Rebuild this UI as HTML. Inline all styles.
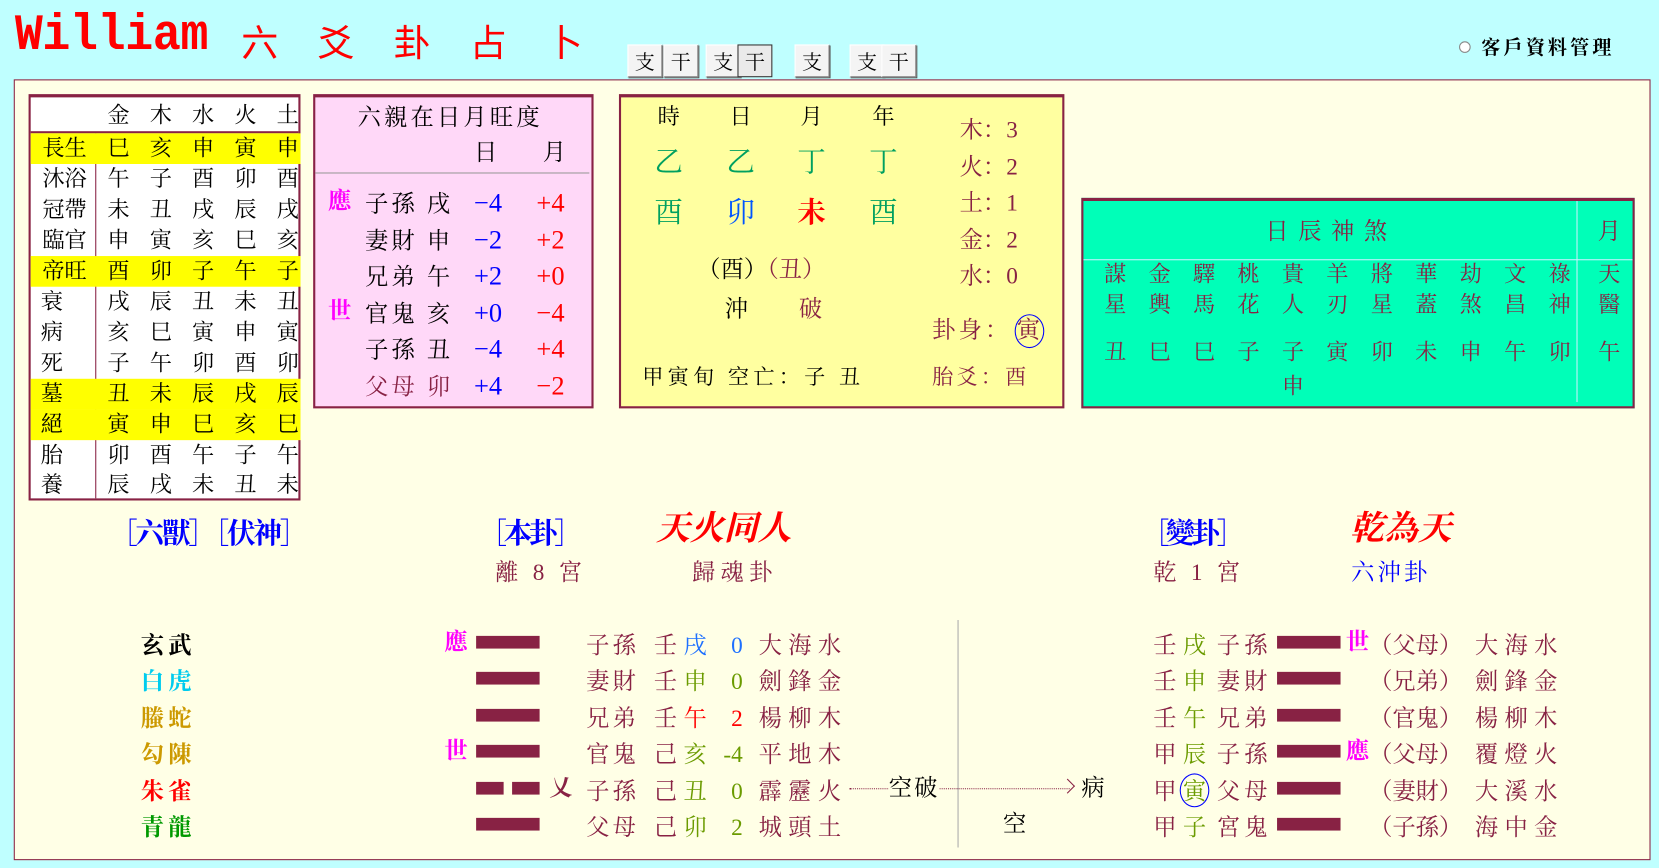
<!DOCTYPE html>
<html><head><meta charset="utf-8">
<style>
html,body{margin:0;padding:0;width:1659px;height:868px;overflow:hidden;background:#bfffff;}
#w{position:absolute;left:0;top:0;width:1568px;height:820px;transform:scale(1.05804);transform-origin:0 0;font-family:"Liberation Serif","Noto Serif CJK SC",serif;color:#882244;}
.a{position:absolute;white-space:nowrap;}
.t{font-size:22px;line-height:28px;}
.btn{position:absolute;top:42px;height:29px;width:31px;background:#f4f4f4;border:1px solid #fff;border-right-color:#888;border-bottom-color:#888;box-shadow:1px 1px 0 #555;font-size:19px;line-height:29px;text-align:center;color:#000;font-family:"Noto Serif CJK SC",serif;}
.row{position:absolute;left:0;width:255px;height:29px;line-height:29px;font-size:21px;color:#000;}
.row span{position:absolute;top:0;width:40px;text-align:center;}
.y{background:#ffff00;}
.bar{position:absolute;height:12px;background:#882244;}
.g span{position:absolute;width:30px;text-align:center;}
.ls{letter-spacing:6px;}
</style></head><body><div id="w">

<div class="a" style="left:14px;top:6px;font-family:'Liberation Mono',monospace;font-weight:bold;font-size:44px;letter-spacing:-0.3px;color:#ff0000;line-height:56px;transform:scaleY(1.1);">William</div>
<div class="a" style="left:228px;top:14px;font-size:35px;color:#ff0000;letter-spacing:37px;font-family:'Noto Sans CJK SC',sans-serif;line-height:50px;">六爻卦占卜</div>

<div class="btn" style="left:593px">支</div><div class="btn" style="left:627px">干</div>
<div class="btn" style="left:667px">支</div><div class="btn" style="left:697px;border-color:#333;background:#eaeaea;box-shadow:none">干</div>
<div class="btn" style="left:751px">支</div>
<div class="btn" style="left:803px">支</div><div class="btn" style="left:833px">干</div>

<div class="a" style="left:1379px;top:39px;width:9px;height:9px;border-radius:50%;background:#fff;border:1px solid #888;"></div>
<div class="a" style="left:1400px;top:31px;font-size:18px;color:#000;letter-spacing:3px;font-weight:bold;">客戶資料管理</div>

<div class="a" style="left:13px;top:75px;width:1545px;height:736px;background:#ffffe6;border:1px solid #882244;"></div>

<div class="a" style="left:27px;top:89px;width:253px;height:379px;background:#fff;border:2px solid #882244;border-top-width:3px;">
 <div class="row" style="top:3px;"><span style="left:63px">金</span><span style="left:103px">木</span><span style="left:143px">水</span><span style="left:183px">火</span><span style="left:223px">土</span></div>
 <div class="a" style="left:0;top:32px;width:253px;height:2px;background:#882244"></div>
 <div class="a" style="left:61px;top:34px;width:1px;height:345px;background:#882244"></div>
 <div class="row y" style="top:34px"><span style="left:4px;width:56px">長生</span><span style="left:63px">巳</span><span style="left:103px">亥</span><span style="left:143px">申</span><span style="left:183px">寅</span><span style="left:223px">申</span></div>
 <div class="row" style="top:63px"><span style="left:4px;width:56px">沐浴</span><span style="left:63px">午</span><span style="left:103px">子</span><span style="left:143px">酉</span><span style="left:183px">卯</span><span style="left:223px">酉</span></div>
 <div class="row" style="top:92px"><span style="left:4px;width:56px">冠帶</span><span style="left:63px">未</span><span style="left:103px">丑</span><span style="left:143px">戌</span><span style="left:183px">辰</span><span style="left:223px">戌</span></div>
 <div class="row" style="top:121px"><span style="left:4px;width:56px">臨官</span><span style="left:63px">申</span><span style="left:103px">寅</span><span style="left:143px">亥</span><span style="left:183px">巳</span><span style="left:223px">亥</span></div>
 <div class="row y" style="top:150px"><span style="left:4px;width:56px">帝旺</span><span style="left:63px">酉</span><span style="left:103px">卯</span><span style="left:143px">子</span><span style="left:183px">午</span><span style="left:223px">子</span></div>
 <div class="row" style="top:179px"><span style="left:0px">衰</span><span style="left:63px">戌</span><span style="left:103px">辰</span><span style="left:143px">丑</span><span style="left:183px">未</span><span style="left:223px">丑</span></div>
 <div class="row" style="top:208px"><span style="left:0px">病</span><span style="left:63px">亥</span><span style="left:103px">巳</span><span style="left:143px">寅</span><span style="left:183px">申</span><span style="left:223px">寅</span></div>
 <div class="row" style="top:237px"><span style="left:0px">死</span><span style="left:63px">子</span><span style="left:103px">午</span><span style="left:143px">卯</span><span style="left:183px">酉</span><span style="left:223px">卯</span></div>
 <div class="row y" style="top:266px"><span style="left:0px">墓</span><span style="left:63px">丑</span><span style="left:103px">未</span><span style="left:143px">辰</span><span style="left:183px">戌</span><span style="left:223px">辰</span></div>
 <div class="row y" style="top:295px"><span style="left:0px">絕</span><span style="left:63px">寅</span><span style="left:103px">申</span><span style="left:143px">巳</span><span style="left:183px">亥</span><span style="left:223px">巳</span></div>
 <div class="row" style="top:324px"><span style="left:0px">胎</span><span style="left:63px">卯</span><span style="left:103px">酉</span><span style="left:143px">午</span><span style="left:183px">子</span><span style="left:223px">午</span></div>
 <div class="row" style="top:352px"><span style="left:0px">養</span><span style="left:63px">辰</span><span style="left:103px">戌</span><span style="left:143px">未</span><span style="left:183px">丑</span><span style="left:223px">未</span></div>
</div>

<div class="a" style="left:296px;top:89px;width:261px;height:292px;background:#ffd8f8;border:2px solid #882244;border-top-width:3px;">
 <div class="a t" style="left:40px;top:5px;color:#000;letter-spacing:3px;">六親在日月旺度</div>
 <div class="a t" style="left:150px;top:38px;color:#000;">日</div>
 <div class="a t" style="left:215px;top:38px;color:#000;">月</div>
 <div class="a" style="left:0;top:71px;width:259px;height:1px;background:#999"></div>
 <div class="a t" style="left:12px;top:84px;color:#ff00ff;font-weight:bold">應</div>
 <div class="a t" style="left:12px;top:188px;color:#ff00ff;font-weight:bold">世</div>
 <div class="a t" style="left:47px;top:84px;color:#000;line-height:34.5px;letter-spacing:3px;">子孫 戌<br>妻財 申<br>兄弟 午<br>官鬼 亥<br>子孫 丑<br><span style="color:#882244">父母 卯</span></div>
 <div class="a" style="left:150px;top:84px;color:#0000ff;font-size:25px;line-height:34.5px;">−4<br>−2<br>+2<br>+0<br>−4<br>+4</div>
 <div class="a" style="left:209px;top:84px;color:#ff0000;font-size:25px;line-height:34.5px;">+4<br>+2<br>+0<br>−4<br>+4<br>−2</div>
</div>

<div class="a" style="left:585px;top:89px;width:417px;height:292px;background:#ffffa0;border:2px solid #882244;border-top-width:3px;">
 <div class="a g" style="left:0;top:4px;font-size:21px;color:#000;line-height:28px;"><span style="left:30px">時</span><span style="left:98px">日</span><span style="left:165px">月</span><span style="left:233px">年</span></div>
 <div class="a g" style="left:0;top:44px;font-size:27px;color:#00a060;line-height:34px;"><span style="left:30px">乙</span><span style="left:98px">乙</span><span style="left:165px">丁</span><span style="left:233px">丁</span></div>
 <div class="a g" style="left:0;top:92px;font-size:27px;color:#00a060;line-height:34px;"><span style="left:30px">酉</span><span style="left:98px;color:#0055ff">卯</span><span style="left:165px;color:#ff0000;font-weight:bold">未</span><span style="left:233px">酉</span></div>
 <div class="a t" style="left:72px;top:149px;color:#000;">（酉）<span style="color:#882244">（丑）</span></div>
 <div class="a t" style="left:98px;top:186px;color:#000;">沖</div>
 <div class="a t" style="left:168px;top:186px;">破</div>
 <div class="a t" style="left:320px;top:14px;line-height:34.5px;">木：3<br>火：2<br>土：1<br>金：2<br>水：0</div>
 <div class="a t" style="left:294px;top:206px;letter-spacing:3px;">卦身：</div>
 <div class="a" style="left:372px;top:205px;width:26px;height:30px;border:1px solid #0000ff;border-radius:50%;"></div>
 <div class="a t" style="left:374px;top:206px;">寅</div>
 <div class="a" style="left:20px;top:251px;font-size:20px;color:#000;line-height:28px;letter-spacing:4px;">甲寅旬 空亡：子 丑</div>
 <div class="a" style="left:294px;top:251px;font-size:20px;line-height:28px;letter-spacing:3px;">胎爻：酉</div>
</div>

<div class="a" style="left:1022px;top:187px;width:519px;height:194px;background:#00ffb8;border:2px solid #882244;border-top-width:3px;">
 <div class="a t" style="left:172px;top:15px;letter-spacing:9px;">日辰神煞</div>
 <div class="a t" style="left:486px;top:15px;">月</div>
 <div class="a" style="left:0;top:55px;width:519px;height:1px;background:#c8f0ff"></div>
 <div class="a" style="left:466px;top:0;width:1px;height:190px;background:#c8f0ff"></div>
 <div class="a g" style="left:0;top:55px;font-size:21px;line-height:29px;">
  <span style="left:15px">謀<br>星</span><span style="left:57px">金<br>輿</span><span style="left:99px">驛<br>馬</span><span style="left:141px">桃<br>花</span><span style="left:183px">貴<br>人</span><span style="left:225px">羊<br>刃</span><span style="left:267px">將<br>星</span><span style="left:309px">華<br>蓋</span><span style="left:351px">劫<br>煞</span><span style="left:393px">文<br>昌</span><span style="left:435px">祿<br>神</span><span style="left:482px">天<br>醫</span>
 </div>
 <div class="a g" style="left:0;top:127px;font-size:21px;line-height:32px;">
  <span style="left:15px">丑</span><span style="left:57px">巳</span><span style="left:99px">巳</span><span style="left:141px">子</span><span style="left:183px">子<br>申</span><span style="left:225px">寅</span><span style="left:267px">卯</span><span style="left:309px">未</span><span style="left:351px">申</span><span style="left:393px">午</span><span style="left:435px">卯</span><span style="left:482px">午</span>
 </div>
</div>

<div class="a" style="left:103px;top:482px;font-size:27px;color:#0000ff;letter-spacing:-2px;font-weight:bold;">［六獸］［伏神］</div>
<div class="a" style="left:452px;top:482px;font-size:27px;color:#0000ff;letter-spacing:-3px;font-weight:bold;">［本卦］</div>
<div class="a" style="left:620px;top:474px;font-size:32px;color:#ff0000;font-style:italic;font-weight:bold;">天火同人</div>
<div class="a t" style="left:468px;top:527px;letter-spacing:4px;">離 8 宮</div>
<div class="a t" style="left:654px;top:527px;letter-spacing:5px;">歸魂卦</div>
<div class="a" style="left:1078px;top:482px;font-size:27px;color:#0000ff;letter-spacing:-3px;font-weight:bold;">［變卦］</div>
<div class="a" style="left:1276px;top:474px;font-size:32px;color:#ff0000;font-style:italic;font-weight:bold;">乾為天</div>
<div class="a t" style="left:1090px;top:527px;letter-spacing:4px;">乾 1 宮</div>
<div class="a t" style="left:1277px;top:527px;color:#0000ff;letter-spacing:3px;">六沖卦</div>

<div class="a t" style="left:133px;top:593px;line-height:34.4px;font-weight:bold;letter-spacing:4px;">
<span style="color:#000">玄武</span><br><span style="color:#00ccee">白虎</span><br><span style="color:#cc9900">螣蛇</span><br><span style="color:#cc9900">勾陳</span><br><span style="color:#ff0000">朱雀</span><br><span style="color:#009900">青龍</span></div>

<div class="a t" style="left:420px;top:593px;color:#ff00ff;font-weight:bold">應</div>
<div class="a t" style="left:420px;top:696px;color:#ff00ff;font-weight:bold">世</div>
<div class="bar" style="left:450px;top:601px;width:60px"></div>
<div class="bar" style="left:450px;top:635px;width:60px"></div>
<div class="bar" style="left:450px;top:670px;width:60px"></div>
<div class="bar" style="left:450px;top:704px;width:60px"></div>
<div class="bar" style="left:450px;top:739px;width:26px"></div>
<div class="bar" style="left:484px;top:739px;width:26px"></div>
<div class="bar" style="left:450px;top:773px;width:60px"></div>
<div class="a t" style="left:519px;top:731px;color:#882244;font-weight:bold">乂</div>

<div class="a t" style="left:554px;top:593px;line-height:34.4px;letter-spacing:3px;">子孫<br>妻財<br>兄弟<br>官鬼<br>子孫<br>父母</div>
<div class="a t" style="left:618px;top:593px;line-height:34.4px;letter-spacing:6px;">壬<span style="color:#1e70ff">戌</span><br>壬<span style="color:#6b9b00">申</span><br>壬<span style="color:#ff0000">午</span><br>己<span style="color:#6b9b00">亥</span><br>己<span style="color:#6b9b00">丑</span><br>己<span style="color:#6b9b00">卯</span></div>
<div class="a" style="left:670px;top:593px;font-size:22px;line-height:34.4px;width:32px;text-align:right;"><span style="color:#1e70ff">0</span><br><span style="color:#6b9b00">0</span><br><span style="color:#ff0000">2</span><br><span style="color:#6b9b00">-4</span><br><span style="color:#6b9b00">0</span><br><span style="color:#6b9b00">2</span></div>
<div class="a t ls" style="left:717px;top:593px;line-height:34.4px;">大海水<br>劍鋒金<br>楊柳木<br>平地木<br>霹靂火<br>城頭土</div>

<div class="a" style="left:803px;top:745px;width:208px;border-top:1px dotted #882244;"></div>
<div class="a t" style="left:840px;top:731px;color:#000;background:#ffffe6;letter-spacing:2px;">空破</div>
<div class="a" style="left:1004px;top:738px;width:9px;height:9px;border-top:1.5px solid #882244;border-right:1.5px solid #882244;transform:rotate(45deg);"></div>
<div class="a t" style="left:1022px;top:731px;color:#000">病</div>
<div class="a t" style="left:948px;top:765px;color:#000">空</div>
<div class="a" style="left:905px;top:586px;width:1px;height:215px;background:#aaa;"></div>

<div class="a t" style="left:1090px;top:593px;line-height:34.4px;letter-spacing:6px;">壬<span style="color:#6b9b00">戌</span><br>壬<span style="color:#6b9b00">申</span><br>壬<span style="color:#6b9b00">午</span><br>甲<span style="color:#6b9b00">辰</span><br>甲<span style="color:#6b9b00">寅</span><br>甲<span style="color:#6b9b00">子</span></div>
<div class="a t" style="left:1150px;top:593px;line-height:34.4px;letter-spacing:4px;">子孫<br>妻財<br>兄弟<br>子孫<br>父母<br>宮鬼</div>
<div class="a" style="left:1115px;top:731px;width:26px;height:30px;border:1px solid #0000ff;border-radius:50%;"></div>
<div class="bar" style="left:1207px;top:601px;width:60px"></div>
<div class="bar" style="left:1207px;top:635px;width:60px"></div>
<div class="bar" style="left:1207px;top:670px;width:60px"></div>
<div class="bar" style="left:1207px;top:704px;width:60px"></div>
<div class="bar" style="left:1207px;top:739px;width:60px"></div>
<div class="bar" style="left:1207px;top:773px;width:60px"></div>
<div class="a t" style="left:1272px;top:593px;color:#ff00ff;font-weight:bold">世</div>
<div class="a t" style="left:1272px;top:696px;color:#ff00ff;font-weight:bold">應</div>
<div class="a t" style="left:1294px;top:593px;line-height:34.4px;">（父母）<br>（兄弟）<br>（官鬼）<br>（父母）<br>（妻財）<br>（子孫）</div>
<div class="a t ls" style="left:1394px;top:593px;line-height:34.4px;">大海水<br>劍鋒金<br>楊柳木<br>覆燈火<br>大溪水<br>海中金</div>

</div></body></html>
